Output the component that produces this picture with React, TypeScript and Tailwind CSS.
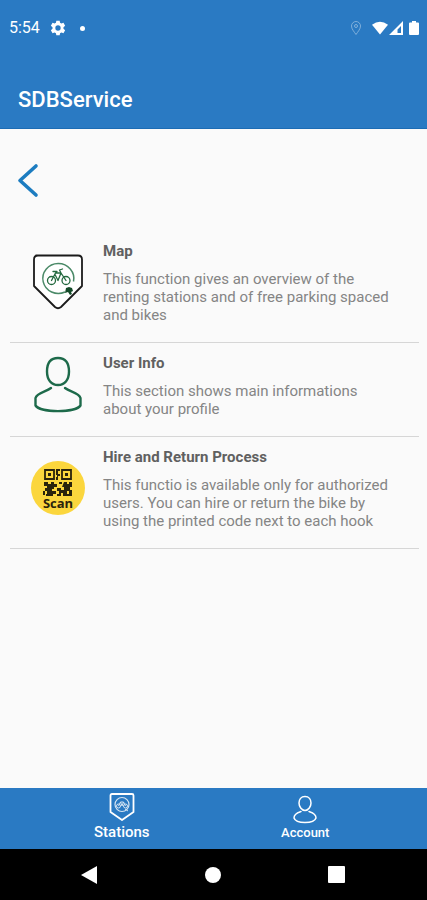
import React from 'react';

const ShieldBikeIcon = () => (
  <svg viewBox="0 0 56 60" className="w-14 h-[60px]" fill="none">
    <path
      d="M6 3.500h42q4 0 4 4v26.500L31 55q-3 2.500-6 0L4 34V7.500q0-4 4-4z"
      fill="#fff"
      stroke="#1b1b1b"
      strokeWidth="1.800"
      strokeLinejoin="round"
    />
    <path d="M43.500 29.500A15.500 15 0 1 0 35 40" stroke="#4b8a68" strokeWidth="1.500" />
    <g stroke="#23693f" strokeWidth="1.300" strokeLinecap="round" strokeLinejoin="round">
      <circle cx="21.500" cy="28.500" r="4" />
      <circle cx="36" cy="28.500" r="4" />
      <path d="M21.500 28.500l4-7.500h5.500l-3 7.500-3-6M31 21l5 7.500M31 21l-1.500-3 3-1M23 19.500h4" />
    </g>
    <path d="M36 36l3-1 3 1 1 3-2 1 1 2-2 1-2-3-3 1z" fill="#134a28" />
  </svg>
);

const UserIcon = () => (
  <svg viewBox="0 0 56 60" className="w-14 h-[60px]" fill="none" stroke="#1d6a4a" strokeWidth="2.400" strokeLinecap="round">
    <path d="M28 3C20.500 3 17 8 17 16.500S21.500 30 28 30s11-5 11-13.500S35.500 3 28 3z" />
    <path d="M21 33C16 37 7 37.500 5.500 43v7.500c5 7.500 40 7.500 45 0V43C49 37.500 40 37 35 33" strokeLinejoin="round" />
  </svg>
);

const ScanIcon = () => (
  <svg viewBox="0 0 56 60" className="w-14 h-[60px]">
    <circle cx="28" cy="30" r="27" fill="#fbd63d" />
    <g fill="none" stroke="#2a230c" strokeWidth="1.800">
      <path d="M15 12h9v9h-9zM32 12h9v9h-9z" />
    </g>
    <g fill="#2a230c">
      <path d="M18 15h3v3h-3zM35 15h3v3h-3z" />
      <path d="M26 11h4v2h-2v3h2v2h-2v4h-2v-3h1v-2h-1z" />
      <path d="M14 24h4v2h3v-2h3v2h3v3h-3v2h-2v2h4v3h-3v2h-4v-2h-2v-3h-2v4h-2v-4h2v-3h2v-2h-3z" />
      <path d="M29 24h3v2h-3zM34 24h3v2h2v-2h3v5h-2v3h2v6h-3v-5h-2v3h2v2h-6v-3h-2v3h-4v-2h2v-3h-2v-3h4v2h3v-3h-2z" />
      <path d="M16 36h4v2h-4z" />
      <text
        x="28"
        y="50"
        textAnchor="middle"
        className="font-['Open_Sans',sans-serif] font-bold text-[13px]"
      >
        Scan
      </text>
    </g>
  </svg>
);

const features = [
  {
    id: 'map',
    title: 'Map',
    text: 'This function gives an overview of the renting stations and of free parking spaced and bikes',
    icon: <ShieldBikeIcon />,
  },
  {
    id: 'user',
    title: 'User Info',
    text: 'This section shows main informations about your profile',
    icon: <UserIcon />,
  },
  {
    id: 'hire',
    title: 'Hire and Return Process',
    text: 'This functio is available only for authorized users. You can hire or return the bike by using the printed code next to each hook',
    icon: <ScanIcon />,
  },
];

const StatusBar = () => (
  <div className="flex items-center px-2 pt-4 h-10 text-white">
    <span className="text-base leading-6 pl-px">5:54</span>
    <svg viewBox="0 0 24 24" className="w-4 h-4 ml-2.5" fill="currentColor">
      <path
        fillRule="evenodd"
        d="M9.500 1h5l.6 3.200 2 1.200 3.100-1.100 2.500 4.400-2.500 2.100v2.400l2.500 2.100-2.500 4.400-3.100-1.100-2 1.200-.6 3.200h-5l-.6-3.200-2-1.200-3.100 1.100-2.500-4.400 2.500-2.100v-2.400L1.300 8.700l2.500-4.400 3.100 1.100 2-1.200zM12 8a4 4 0 1 0 0 8 4 4 0 0 0 0-8z"
      />
    </svg>
    <span className="w-[5px] h-[5px] ml-3.5 rounded-full bg-white" />
    <div className="flex items-center ml-auto">
      <svg viewBox="0 0 12 16" className="w-3 h-4 mr-2.5 opacity-40" fill="none" stroke="currentColor">
        <path d="M6 14.500C4 11.500 1.500 9 1.500 6a4.500 4.500 0 0 1 9 0c0 3-2.500 5.500-4.500 8.500z" />
        <circle cx="6" cy="6" r="1.500" />
      </svg>
      <svg viewBox="0 0 17 14" className="w-4 h-3.5" fill="currentColor">
        <path d="M0 3.500Q8.500-3 17 3.500L8.500 14z" />
      </svg>
      <svg viewBox="0 0 14 14" className="w-3.5 h-3.5 ml-px" fill="currentColor">
        <path fillRule="evenodd" d="M14 0v14H0zM12 5L8.500 8.500V12H12z" />
      </svg>
      <svg viewBox="0 0 10 14" className="w-2.5 h-3.5 ml-1.5" fill="currentColor">
        <path d="M3 0h4v1.500h2q1 0 1 1V13q0 1-1 1H1q-1 0-1-1V2.500q0-1 1-1h2z" />
      </svg>
    </div>
  </div>
);

const TabBar = () => (
  <nav className="grid grid-cols-2 h-[61px] px-[30px] bg-[#2a7ac3] text-white">
    <button type="button" className="flex flex-col items-center pt-1">
      <svg viewBox="0 0 28 30" className="w-7 h-[30px]" fill="none" stroke="currentColor">
        <path d="M4 2h20q1.500 0 1.500 1.500V20L14 28 2.500 20V3.500Q2.500 2 4 2z" strokeWidth="1.800" strokeLinejoin="round" />
        <g opacity="0.800">
          <circle cx="14" cy="12.500" r="7" strokeWidth="1.200" />
          <circle cx="10.500" cy="14" r="2" />
          <circle cx="17.500" cy="14" r="2" />
          <path d="M10.500 14l2-4h3l2 4M12.500 10l1.500 4 1.500-4M17 17l3 2" />
        </g>
      </svg>
      <span className="text-[15px] leading-5 font-medium">Stations</span>
    </button>
    <button type="button" className="flex flex-col items-center pt-1.5">
      <svg viewBox="0 0 28 30" className="w-7 h-[30px]" fill="none" stroke="currentColor" strokeWidth="1.500" strokeLinecap="round">
        <path d="M14 2.500c-4 0-6 3-6 6.500s2.500 7.500 6 7.500 6-4 6-7.500-2-6.500-6-6.500z" />
        <path d="M10 17.500c-3 1-7 2-7 6.500 2 6 20 6 22 0 0-4.500-4-5.500-7-6.500" />
      </svg>
      <span className="text-[13px] leading-[18px] font-medium">Account</span>
    </button>
  </nav>
);

const SystemBar = () => (
  <div className="flex items-center justify-between h-[51px] px-20 bg-black text-white">
    <button type="button" aria-label="Back">
      <svg viewBox="0 0 18 20" className="w-[18px] h-5" fill="currentColor">
        <path d="M17 1v18L1 10z" />
      </svg>
    </button>
    <button type="button" aria-label="Home" className="w-4 h-4 rounded-full bg-white" />
    <button type="button" aria-label="Recent apps" className="w-[17px] h-[17px] mr-0.5 rounded-[1px] bg-white" />
  </div>
);

const App = () => {
  return (
    <div className="flex flex-col min-h-screen bg-[#fafafa] font-[Roboto,sans-serif]">
      <header className="bg-[#2a7ac3] text-white pb-[15px] border-b border-[#1c6cb4]">
        <StatusBar />
        <h1 className="mt-[47px] px-[18px] text-[22px] leading-[26px] font-medium">SDBService</h1>
      </header>

      <main className="flex-1">
        <div className="px-4 pt-[33px] pb-8">
          <button type="button" aria-label="Go back" className="block">
            <svg viewBox="0 0 24 37" className="w-6 h-[37px]" fill="none" stroke="#1c7cc0" strokeWidth="3.600" strokeLinecap="round">
              <path d="M20 4L4 18.500 20 33" strokeLinejoin="round" />
            </svg>
          </button>
        </div>

        <ul className="pl-2.5 pr-2">
          {features.map(feature => (
            <li key={feature.id} className="flex items-center pl-5 pr-[22px] border-b border-[#d6d6d6]">
              <div className="shrink-0 pb-2.5">{feature.icon}</div>
              <div className="ml-[17px] pt-2.5 pb-[18px]">
                <h2 className="text-[15px] leading-5 font-bold text-[#606060]">{feature.title}</h2>
                <p className="mt-[9px] text-[15px] leading-[18px] text-[#858585]">{feature.text}</p>
              </div>
            </li>
          ))}
        </ul>
      </main>

      <TabBar />
      <SystemBar />
    </div>
  );
};

export default App;
